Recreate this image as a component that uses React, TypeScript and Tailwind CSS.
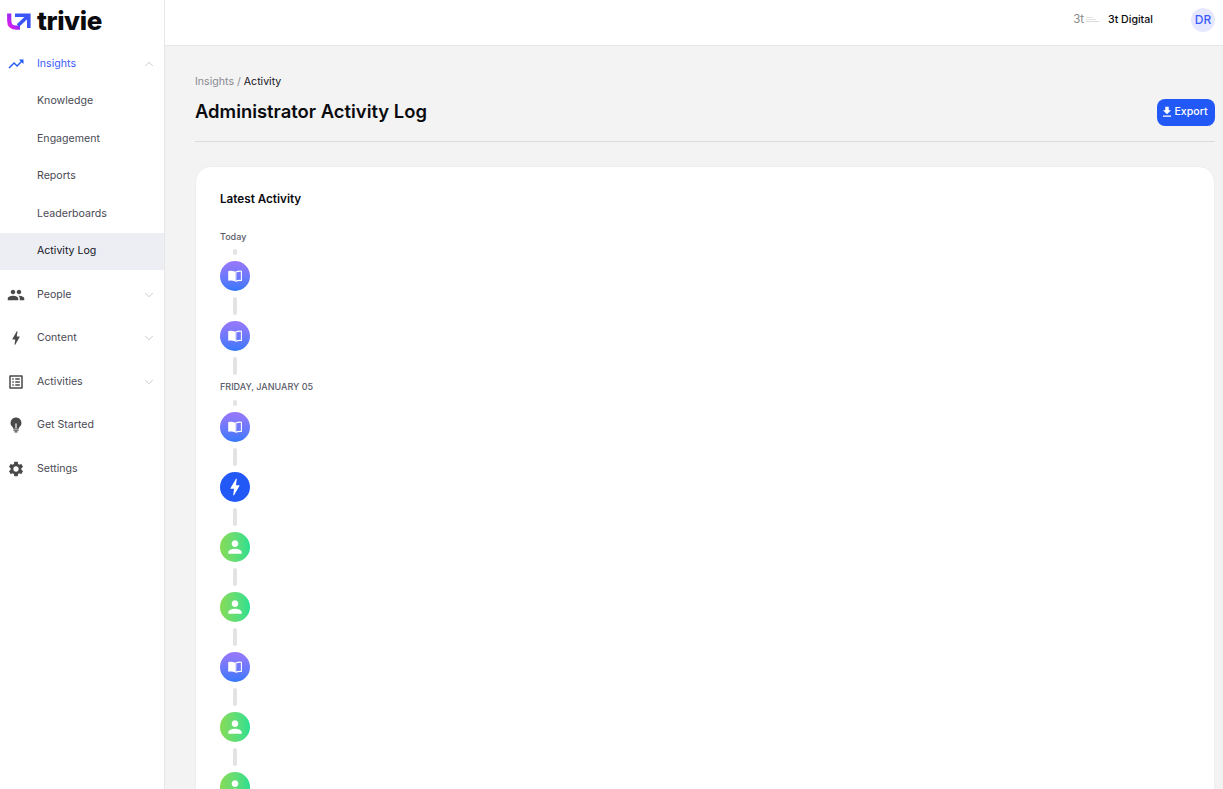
import { ChevronDown, ChevronUp } from "lucide-react";
import {
  MdBolt,
  MdFileDownload,
  MdOutlineListAlt,
  MdPeople,
  MdPerson,
  MdSettings,
  MdTrendingUp,
} from "react-icons/md";
import type { ReactNode } from "react";

function BookIcon() {
  return (
    <svg width="16" height="16" viewBox="0 0 16 16" fill="none">
      <path d="M1.2 3.2C3.4 2.5 5.8 2.6 8 3.6V13.2C5.8 12.3 3.4 12.2 1.2 12.8Z" fill="white" />
      <path d="M8.8 3.9C10.5 3.2 12.8 3 14.4 3.2V12.5C12.8 12.3 10.5 12.5 8.8 13.2Z" stroke="white" strokeWidth="1.1" />
    </svg>
  );
}

function BulbIcon() {
  return (
    <svg width="18" height="18" viewBox="0 0 24 24" fill="currentColor">
      <path d="M12 2a7.2 7.2 0 0 0-4 13.2V17h8v-1.8A7.2 7.2 0 0 0 12 2z" />
      <path d="M8.5 18h7v1.6h-7zM10 20.4h4V22h-4z" />
      <path d="M11.2 10h1.6v6h-1.6z" fill="white" />
    </svg>
  );
}

function TopItem({ icon, label, open, chevron = true, active = false }: { icon: ReactNode; label: string; open?: boolean; chevron?: boolean; active?: boolean }) {
  return (
    <div className={`flex h-[43.5px] items-center text-[10.6px] ${active ? "text-[#3b5bfd]" : "text-[#4a4a55]"}`}>
      <div className={`flex w-[37px] justify-center pr-[5px] text-[18px] ${active ? "text-[#2258f6]" : "text-[#4a4a4a]"}`}>{icon}</div>
      <span className="flex-1">{label}</span>
      {chevron &&
        (open ? (
          <ChevronUp size={14} strokeWidth={1.2} className="mr-2 text-[#b4b4b4]" />
        ) : (
          <ChevronDown size={14} strokeWidth={1.2} className="mr-2 text-[#b4b4b4]" />
        ))}
    </div>
  );
}

function SubItem({ label, active = false }: { label: string; active?: boolean }) {
  return (
    <div className={`flex h-[37.5px] items-center pl-[37px] text-[10.6px] ${active ? "bg-[#eceef4] text-[#15151c]" : "text-[#4a4a55]"}`}>
      {label}
    </div>
  );
}

function Sidebar() {
  return (
    <aside className="flex w-[165px] shrink-0 flex-col border-r border-[#e6e6e6] bg-white">
      <div className="flex h-[42px] items-center pl-[7px]">
        <svg width="24" height="17" viewBox="0 0 24 17" fill="none">
          <defs>
            <linearGradient id="logo" x1="0" y1="1" x2="1" y2="0">
              <stop offset="0" stopColor="#e01cec" />
              <stop offset="0.55" stopColor="#8f2cf5" />
              <stop offset="1" stopColor="#2f5cf8" />
            </linearGradient>
          </defs>
          <path d="M2.2 0.5V7.5C2.2 12.4 5 14.6 9 14.6H13" stroke="url(#logo)" strokeWidth="4.2" />
          <path d="M8 2.2H21.8V15M21 3L11 12.5" stroke="#3b55f7" strokeWidth="3.6" />
        </svg>
        <span className="ml-[6px] text-[26px] font-extrabold leading-none tracking-[-0.4px] text-[#0b0b0f]">trivie</span>
      </div>
      <TopItem icon={<MdTrendingUp />} label="Insights" open active />
      <div className="-mt-[3px]">
        <SubItem label="Knowledge" />
        <SubItem label="Engagement" />
        <SubItem label="Reports" />
        <SubItem label="Leaderboards" />
        <SubItem label="Activity Log" active />
      </div>
      <div className="pt-[3px]">
        <TopItem icon={<MdPeople />} label="People" open={false} />
        <TopItem icon={<MdBolt />} label="Content" open={false} />
        <TopItem icon={<MdOutlineListAlt />} label="Activities" open={false} />
        <TopItem icon={<BulbIcon />} label="Get Started" chevron={false} />
        <TopItem icon={<MdSettings />} label="Settings" chevron={false} />
      </div>
    </aside>
  );
}

function Header() {
  return (
    <header className="flex h-[46px] shrink-0 items-center justify-end border-b border-[#e6e6e6] bg-white pb-[6px] pr-2">
      <span className="text-[11.5px] text-[#8a8a8a]">3t</span>
      <div className="ml-[2px] flex w-[13px] flex-col gap-[1px]">
        <div className="h-px w-[7px] bg-[#e2e2e2]" />
        <div className="h-px w-[10px] bg-[#e2e2e2]" />
        <div className="h-px w-[13px] bg-[#dadada]" />
      </div>
      <span className="ml-[9px] w-[83px] text-[10.6px] font-medium text-[#0b0b0f]">3t Digital</span>
      <div className="flex h-6 w-6 items-center justify-center rounded-full bg-[#e6e8ff] text-[12px] font-medium text-[#3b5bfd]">DR</div>
    </header>
  );
}

function Tick({ short = false }: { short?: boolean }) {
  return <div className={`ml-[13px] w-1 rounded-sm bg-[#e3e3e3] ${short ? "h-[6px]" : "h-[18px]"}`} />;
}

const dotStyles = {
  book: "bg-gradient-to-b from-[#9a78fa] to-[#3377fb]",
  bolt: "bg-[#2258f6]",
  person: "bg-gradient-to-r from-[#85db55] to-[#25df8f]",
};

function Dot({ kind }: { kind: "book" | "bolt" | "person" }) {
  return (
    <div className={`flex h-[30px] w-[30px] shrink-0 items-center justify-center rounded-full text-white ${dotStyles[kind]}`}>
      {kind === "book" && <BookIcon />}
      {kind === "bolt" && <MdBolt size={22} />}
      {kind === "person" && <MdPerson size={20} />}
    </div>
  );
}

function Group({ items }: { items: ("book" | "bolt" | "person")[] }) {
  return (
    <div className="mt-[6px]">
      <Tick short />
      {items.map((kind, i) => (
        <div key={i}>
          <div className="mt-[6px]">
            <Dot kind={kind} />
          </div>
          <div className="mt-[6px]">
            <Tick />
          </div>
        </div>
      ))}
    </div>
  );
}

export default function App() {
  return (
    <div className="flex h-screen overflow-hidden bg-[#f3f3f3] font-['Inter',sans-serif]">
      <Sidebar />
      <div className="flex min-w-0 flex-1 flex-col">
        <Header />
        <main className="flex-1 pl-[30px] pr-2">
          <div className="h-[96px] border-b border-[#dcdcdc] pt-[29px]">
            <div className="text-[10.6px] leading-[14px] text-[#8a8a92]">
              Insights / <span className="text-[#15151c]">Activity</span>
            </div>
            <div className="mt-[10px] flex items-start justify-between">
              <h1 className="text-[18.4px] font-semibold leading-[24px] text-[#0b0b0f]">Administrator Activity Log</h1>
              <button className="flex h-[27px] w-[58px] items-center justify-center rounded-lg bg-[#2258f6] pb-[2px] pr-[4px] text-[10.6px] font-medium text-white">
                <MdFileDownload size={14} />
                Export
              </button>
            </div>
          </div>
          <section className="mt-[24px] h-[800px] rounded-[16px] border border-[#eeeeee] bg-white pl-[24px] pt-[24px]">
            <h2 className="text-[11.7px] font-semibold leading-[16px] text-[#0b0b0f]">Latest Activity</h2>
            <div className="mt-[24px] text-[9px] font-medium leading-[12px] text-[#5a5a68]">Today</div>
            <Group items={["book", "book"]} />
            <div className="mt-[6px] text-[9px] font-medium leading-[12px] text-[#5a5a68]">FRIDAY, JANUARY 05</div>
            <div className="pt-px">
              <Group items={["book", "bolt", "person", "person", "book", "person", "person"]} />
            </div>
          </section>
        </main>
      </div>
    </div>
  );
}
